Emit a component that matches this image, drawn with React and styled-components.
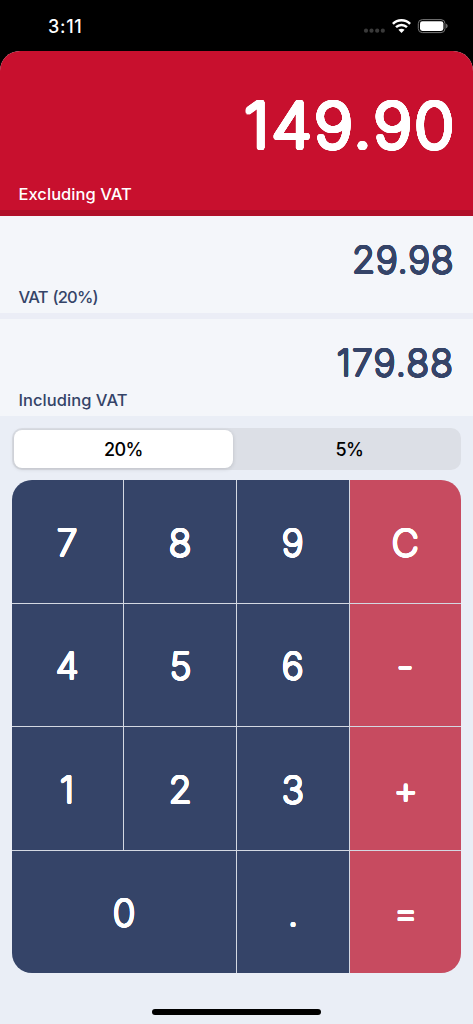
import React, { useState } from "react";
import styled, { createGlobalStyle } from "styled-components";

const colors = {
  red: "#c8102e",
  darkRed: "#b01029",
  softRed: "#c74b60",
  navy: "#354468",
  page: "#eaeef6",
  panel: "#f4f6fa",
  white: "#ffffff",
};

const keys = [
  { label: "7" },
  { label: "8" },
  { label: "9" },
  { label: "C", action: true },
  { label: "4" },
  { label: "5" },
  { label: "6" },
  { label: "-", action: true },
  { label: "1" },
  { label: "2" },
  { label: "3" },
  { label: "+", action: true },
  { label: "0", wide: true },
  { label: "." },
  { label: "=", action: true },
];

const rates = ["20%", "5%"];

// thickens a thin typeface evenly so the stroke ends come out round
const rounded = (radius, steps = 20) =>
  Array.from({ length: steps }, (_, i) => {
    const angle = (i / steps) * Math.PI * 2;
    const x = (Math.cos(angle) * radius).toFixed(2);
    const y = (Math.sin(angle) * radius).toFixed(2);
    return `${x}px ${y}px 0 currentColor`;
  }).join(", ");

const App = () => {
  const [rate, setRate] = useState("20%");

  return (
    <Screen>
      <GlobalStyle />
      <StatusBar>
        <Time>3:11</Time>
        <StatusIcons>
          <Signal />
          <Wifi />
          <Battery />
        </StatusIcons>
      </StatusBar>
      <Body>
        <MainPanel>
          <MainAmount>149.90</MainAmount>
          <Label>Excluding VAT</Label>
        </MainPanel>
        <Panel $divider>
          <Amount $spacing="0.6px">29.98</Amount>
          <Label $spacing="-0.8px">VAT (20%)</Label>
        </Panel>
        <Panel>
          <Amount $spacing="1.1px">179.88</Amount>
          <Label>Including VAT</Label>
        </Panel>
        <Segments>
          {rates.map((item) => (
            <Segment
              key={item}
              $active={item === rate}
              onClick={() => setRate(item)}
            >
              {item}
            </Segment>
          ))}
        </Segments>
        <Keypad>
          {keys.map(({ label, action, wide }) => (
            <Key key={label} $action={action} $wide={wide}>
              <Glyph>{label}</Glyph>
            </Key>
          ))}
        </Keypad>
        <HomeIndicator />
      </Body>
    </Screen>
  );
};

const Signal = () => (
  <svg width="22" height="16" viewBox="0 0 22 16" fill="#3a3a3a">
    <circle cx="3" cy="12.7" r="2.1" />
    <circle cx="8.5" cy="12.7" r="2.1" />
    <circle cx="14.2" cy="12.7" r="2.1" />
    <circle cx="19.8" cy="12.7" r="2.1" />
  </svg>
);

const Wifi = () => (
  <svg width="20" height="16" viewBox="0 0 20 16" fill="none">
    <path
      d="M1.9 5.8C6.6 1.1 14.4 1.1 19.1 5.8M5 9.2C8.2 6.2 12.8 6.2 16 9.2"
      stroke="white"
      strokeWidth="2.5"
    />
    <path
      d="M10.5 15L7.4 11.8C9.2 10.3 11.8 10.3 13.6 11.8Z"
      fill="white"
    />
  </svg>
);

const Battery = () => (
  <svg width="31" height="16" viewBox="0 0 31 16" fill="none">
    <rect x="1.3" y="1.6" width="26.7" height="13" rx="4" stroke="#777" />
    <rect x="3" y="3.2" width="23.4" height="9.8" rx="2.4" fill="white" />
    <path d="M29.1 5.8C31.1 6.5 31.1 9.6 29.1 10.3Z" fill="#777" />
  </svg>
);

export default App;

const GlobalStyle = createGlobalStyle`
  * {
    box-sizing: border-box;
  }

  body {
    margin: 0;
    background: black;
    font-family: Inter, "Liberation Sans", sans-serif;
  }
`;

const Screen = styled.div`
  display: flex;
  flex-direction: column;
  width: 473px;
  height: 1024px;
  overflow: hidden;
  background-color: black;
`;

const StatusBar = styled.header`
  display: flex;
  justify-content: space-between;
  height: 50.5px;
  padding: 17px 25px 0 48px;
  color: ${colors.white};
`;

const Time = styled.span`
  font-size: 18px;
  font-weight: 500;
  line-height: 20px;
  letter-spacing: 0.7px;
`;

const StatusIcons = styled.div`
  display: flex;
  gap: 6px;
  margin-top: 1px;
`;

const Body = styled.main`
  display: flex;
  flex: 1;
  flex-direction: column;
  overflow: hidden;
  border-radius: 20px 20px 0 0;
  background-color: ${colors.page};
`;

const MainPanel = styled.section`
  display: flex;
  flex-direction: column;
  justify-content: space-between;
  height: 165.5px;
  padding: 34px 19px 5px;
  border-bottom: 6px solid ${colors.darkRed};
  background-color: ${colors.red};
  color: ${colors.white};
`;

const Panel = styled.section`
  display: flex;
  flex-direction: column;
  justify-content: space-between;
  height: ${({ $divider }) => ($divider ? "103px" : "97px")};
  padding: 20px 19px 5px;
  border-bottom: ${({ $divider }) => ($divider ? "6px" : "0")} solid #ebedf6;
  background-color: ${colors.panel};
  color: ${colors.navy};
`;

const MainAmount = styled.div`
  align-self: flex-end;
  margin-right: -2.5px;
  font-size: 62.5px;
  font-weight: 200;
  line-height: 81px;
  letter-spacing: 2.1px;
  text-shadow: ${rounded(2.2, 28)}, ${rounded(1.1)};
  transform: scaleX(1.06);
  transform-origin: right;
`;

const Amount = styled.div`
  align-self: flex-end;
  margin-right: -0.5px;
  font-size: 36.5px;
  font-weight: 200;
  line-height: 49px;
  letter-spacing: ${({ $spacing }) => $spacing};
  text-shadow: ${rounded(0.95)};
  transform: scaleX(1.03);
  transform-origin: right;
`;

const Label = styled.div`
  margin-left: -0.5px;
  font-size: 16.5px;
  font-weight: 500;
  line-height: 22px;
  letter-spacing: ${({ $spacing }) => $spacing || "0.04px"};
  word-spacing: ${({ $spacing }) => ($spacing ? "1.2px" : "0")};
`;

const Segments = styled.div`
  display: flex;
  flex-shrink: 0;
  gap: 7px;
  width: 449px;
  height: 42px;
  margin: 11.5px 12px 0;
  padding: 2px;
  border-radius: 10px;
  background-color: #dcdfe6;
`;

const Segment = styled.button`
  flex: 1;
  padding: 1px 0 0;
  border: 0;
  border-radius: 8px;
  background-color: ${({ $active }) => ($active ? "white" : "transparent")};
  box-shadow: ${({ $active }) =>
    $active ? "0 1px 4px rgba(0, 0, 0, 0.15)" : "none"};
  color: black;
  font-family: inherit;
  font-size: 18px;
  font-weight: 500;
  letter-spacing: -0.6px;
`;

const Keypad = styled.div`
  display: grid;
  flex-shrink: 0;
  grid-template-columns: 111.5px 112px 111.5px 1fr;
  grid-template-rows: repeat(4, 1fr);
  gap: 1px;
  width: 449.5px;
  height: 493px;
  margin: 10.5px 11.7px 0;
  overflow: hidden;
  border-radius: 20px;
  background-color: #d3d8e2;
`;

const Key = styled.button`
  grid-column: ${({ $wide }) => ($wide ? "span 2" : "auto")};
  padding: 3px 0 0;
  border: 0;
  background-color: ${({ $action }) =>
    $action ? colors.softRed : colors.navy};
  color: ${colors.white};
  font-family: inherit;
`;

const Glyph = styled.span`
  display: inline-block;
  font-size: 36.5px;
  font-weight: 200;
  text-shadow: ${rounded(0.95)};
  transform: scaleX(1.03);
`;

const HomeIndicator = styled.div`
  flex-shrink: 0;
  width: 169px;
  height: 6px;
  margin: 35.5px auto 0;
  border-radius: 3px;
  background-color: black;
`;
